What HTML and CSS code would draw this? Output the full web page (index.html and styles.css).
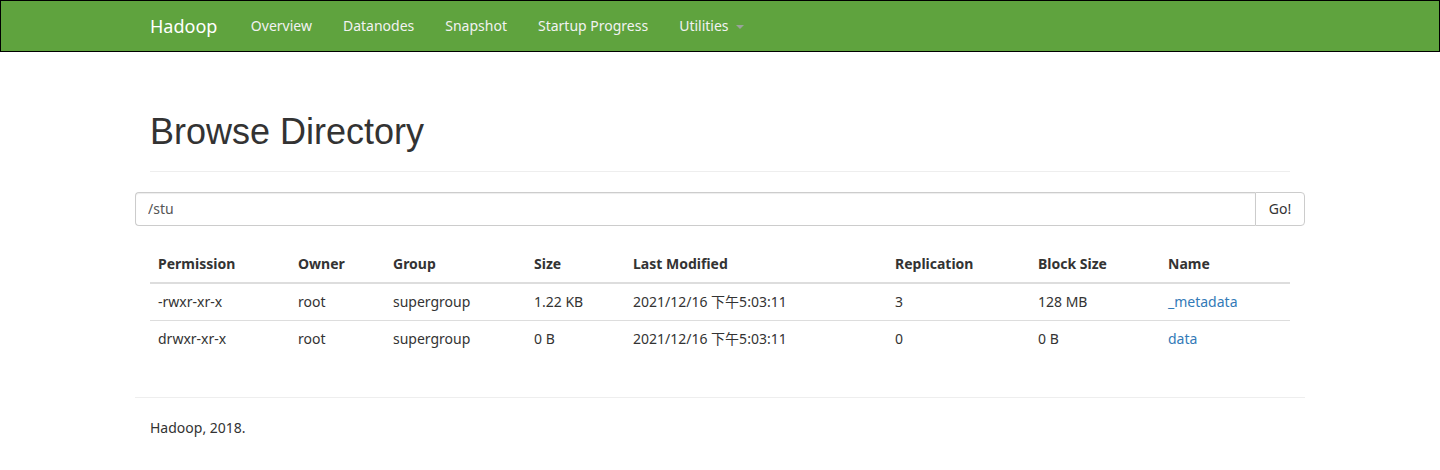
FILE: index.html
```html
<!DOCTYPE html>
<html lang="en">
<head>
<meta charset="utf-8">
<title>Browsing HDFS</title>
<link rel="stylesheet" href="styles.css">
</head>
<body>
<header class="navbar">
  <div class="nav-inner">
    <a class="brand" href="#">Hadoop</a>
    <ul class="nav">
      <li><a href="#">Overview</a></li>
      <li><a href="#">Datanodes</a></li>
      <li><a href="#">Snapshot</a></li>
      <li><a href="#">Startup Progress</a></li>
      <li><a href="#">Utilities <span class="caret"></span></a></li>
    </ul>
  </div>
</header>

<main class="container">
  <div class="page-header">
    <h1>Browse Directory</h1>
  </div>

  <form class="search">
    <input class="search-input" type="text" value="/stu">
    <button class="search-btn" type="button">Go!</button>
  </form>

  <div class="spacer"></div>

  <table class="table">
    <colgroup>
      <col class="c-perm"><col class="c-owner"><col class="c-group"><col class="c-size">
      <col class="c-mod"><col class="c-rep"><col class="c-block"><col class="c-name">
    </colgroup>
    <thead>
      <tr>
        <th>Permission</th><th>Owner</th><th>Group</th><th>Size</th>
        <th>Last Modified</th><th>Replication</th><th>Block Size</th><th>Name</th>
      </tr>
    </thead>
    <tbody>
      <tr>
        <td>-rwxr-xr-x</td><td>root</td><td>supergroup</td><td>1.22 KB</td>
        <td>2021/12/16 下午5:03:11</td><td>3</td><td>128 MB</td><td><a href="#">_metadata</a></td>
      </tr>
      <tr>
        <td>drwxr-xr-x</td><td>root</td><td>supergroup</td><td>0 B</td>
        <td>2021/12/16 下午5:03:11</td><td>0</td><td>0 B</td><td><a href="#">data</a></td>
      </tr>
    </tbody>
  </table>

  <hr class="footer-rule">
  <p class="footer">Hadoop, 2018.</p>
</main>
</body>
</html>
```

FILE: styles.css
```css
* { box-sizing: border-box; }

html, body {
  margin: 0;
  padding: 0;
  background: #fff;
}

body {
  font-family: "Noto Sans", "Noto Sans CJK SC", sans-serif;
  font-size: 14px;
  line-height: 20px;
  color: #333;
}

a { color: #337ab7; text-decoration: none; }

.navbar {
  background: #5fa33e;
  border: 1px solid #000;
  height: 52px;
  margin-bottom: 20px;
}

.nav-inner {
  width: 1170px;
  margin: 0 auto;
  padding: 0 15px;
  display: flex;
  align-items: center;
  height: 50px;
}

.brand {
  color: #fff;
  font-size: 18px;
  line-height: 20px;
  padding: 15px 18px 15px 0;
}

.nav {
  list-style: none;
  margin: 0;
  padding: 0;
  display: flex;
}

.nav a {
  display: block;
  padding: 15px 15.5px;
  color: #f2f2f2;
  line-height: 20px;
}

.caret {
  display: inline-block;
  width: 0;
  height: 0;
  margin-left: 4px;
  vertical-align: middle;
  border-top: 4px solid #9aa39a;
  border-left: 4px solid transparent;
  border-right: 4px solid transparent;
}

.container {
  width: 1170px;
  margin: 0 auto;
  padding: 0 15px;
  display: flow-root;
}

.page-header {
  margin: 40px 0 20px;
  padding-bottom: 9px;
  border-bottom: 1px solid #eee;
}

.page-header h1 {
  margin: 0 0 10px;
  font-family: "Liberation Sans", Arial, sans-serif;
  font-size: 36px;
  font-weight: 500;
  line-height: 39.6px;
  color: #333;
}

.search {
  display: flex;
  margin: 0 -15px;
  height: 34px;
}

.search-input {
  flex: 1;
  height: 34px;
  margin: 0;
  padding: 6px 12px;
  font: inherit;
  color: #555;
  border: 1px solid #ccc;
  border-right: 0;
  border-radius: 4px 0 0 4px;
  box-shadow: inset 0 1px 1px rgba(0,0,0,0.075);
  outline: none;
}

.search-btn {
  width: 50px;
  height: 34px;
  margin: 0;
  padding: 6px 12px;
  font: inherit;
  color: #333;
  background: #fff;
  border: 1px solid #ccc;
  border-radius: 0 4px 4px 0;
}

.spacer { height: 20px; }

.table {
  width: 100%;
  border-collapse: collapse;
  border-spacing: 0;
  margin-bottom: 40px;
  table-layout: fixed;
}

.c-perm { width: 140px; }
.c-owner { width: 95px; }
.c-group { width: 141px; }
.c-size { width: 99px; }
.c-mod { width: 262px; }
.c-rep { width: 143px; }
.c-block { width: 130px; }
.c-name { width: 130px; }

.table th,
.table td {
  padding: 8px;
  line-height: 20px;
  text-align: left;
  vertical-align: top;
  white-space: nowrap;
}

.table th {
  font-weight: 700;
  border-bottom: 2px solid #ddd;
}

.table td {
  border-top: 1px solid #ddd;
}

.table thead + tbody tr:first-child td { border-top: 0; }

.footer-rule {
  margin: 20px -15px;
  border: 0;
  border-top: 1px solid #eee;
}

.footer {
  margin: 0 0 10px;
}
```
